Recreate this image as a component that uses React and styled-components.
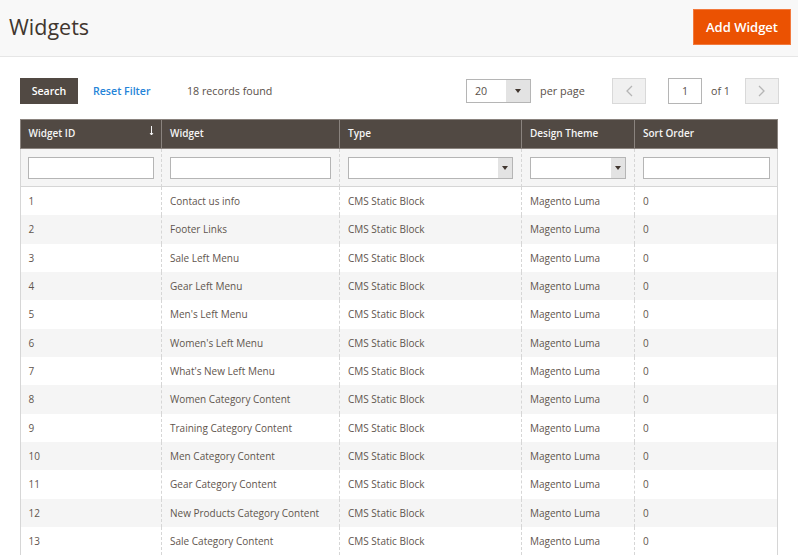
import React from 'react';
import styled, { createGlobalStyle } from 'styled-components';

const Global = createGlobalStyle`
  html, body { margin: 0; padding: 0; background: #fff; overflow: hidden; height: 556px; }
  body { font-family: "Open Sans", "Liberation Sans", sans-serif; color: #41362f; }
  * { box-sizing: border-box; }
`;

const Page = styled.div`width: 798px; height: 556px; overflow: hidden;`;
const Header = styled.header`
  height: 57px; background: #f8f8f8; border-bottom: 1px solid #e6e6e6;
  display: flex; align-items: flex-start; justify-content: space-between;
  padding: 9px 7px 0 9px;
`;
const Title = styled.h1`
  margin: 0; font-size: 21.5px; line-height: 35px; font-weight: 400; color: #41362f;
`;
const AddButton = styled.button`
  width: 98px; height: 36px; border: 1px solid #f2793d; background: #eb5202; color: #fff;
  font: 600 13px "Open Sans", sans-serif; padding: 0;
`;
const Content = styled.main`padding: 21px 20px 0;`;
const Toolbar = styled.div`display: flex; align-items: center; height: 26px; margin-bottom: 15px;`;
const SearchButton = styled.button`
  width: 58px; height: 26px; border: 0; background: #514943; color: #fff;
  font: 600 10.6px "Open Sans", sans-serif; padding: 0 0 1px; flex: none;
`;
const ResetLink = styled.a`
  margin-left: 15px; width: 94px; color: #2584d8; font-size: 10.6px; font-weight: 600; flex: none;
  line-height: 26px; align-self: flex-start;
`;
const Records = styled.span`
  font-size: 10.7px; color: #5a5049; flex: none; width: 279px; line-height: 26px; align-self: flex-start;
`;
const PerPage = styled.div`
  width: 65px; height: 24px; border: 1px solid #b5b5b5; display: flex; flex: none; background: #fff;
`;
const PerValue = styled.span`flex: 1; font-size: 10.7px; line-height: 22px; padding-left: 8px; color: #5a5049;`;
const SelectCap = styled.span`
  width: ${p => p.$w}px; align-self: stretch; background: #e3e3e3; display: flex;
  align-items: center; justify-content: center; flex: none;
`;
const Caret = styled.i`
  width: 0; height: 0; border-left: 3px solid transparent; border-right: 3px solid transparent;
  border-top: 4px solid #41362f;
`;
const PerLabel = styled.span`
  font-size: 10.9px; margin-left: 9px; flex: none; width: 72px; line-height: 26px; align-self: flex-start; color: #5a5049;
`;
const PageButton = styled.button`
  width: 34px; height: 26px; background: #f0f0f0; border: 1px solid #d9d9d9; padding: 0;
  display: flex; align-items: center; justify-content: center; flex: none;
`;
const PageInput = styled.div`
  width: 34px; height: 26px; margin-left: 22px; border: 1px solid #b5b5b5; background: #fff;
  font-size: 10.7px; line-height: 24px; text-align: center; flex: none; color: #5a5049;
`;
const OfLabel = styled.span`
  font-size: 10.7px; margin-left: 9px; width: 34px; flex: none; line-height: 26px; align-self: flex-start; color: #5a5049;
`;

const Table = styled.table`
  width: 758px; border-collapse: separate; border-spacing: 0; table-layout: fixed;
  font-size: 10px;
`;
const Th = styled.th`
  height: 30px; padding: 0 8px 2px; background: #514943; color: #f5f5f5; text-align: left;
  font-size: 10px; font-weight: 600; position: relative;
  border-left: 1px solid #8a837e; border-top: 1px solid #8a837e; border-bottom: 1px solid #8a837e;
  &:first-child { padding-left: 7.5px; }
  &:last-child { border-right: 1px solid #8a837e; }
`;
const SortArrow = styled.svg`position: absolute; right: 7px; top: 6px;`;
const FilterCell = styled.td`
  height: 38px; padding: 0 8px; background: #f5f5f5;
  border-left: 1px dashed #d6d6d6; border-bottom: 1px solid #d6d6d6;
  &:first-child { border-left: 1px solid #d6d6d6; padding-left: 7px; padding-right: 7px; }
  &:last-child { border-right: 1px solid #d6d6d6; padding-right: 7px; }
`;
const FilterInput = styled.div`
  height: 22px; border: 1px solid #b5b5b5; background: #fff; display: flex; justify-content: flex-end;
`;
const Td = styled.td`
  height: 28.33px; padding: 0 8px; color: #5f554e; background: ${p => (p.$odd ? '#f5f5f5' : '#fff')};
  border-left: 1px dashed #d6d6d6; white-space: nowrap; overflow: hidden;
  &:first-child { border-left: 1px solid #d6d6d6; padding-left: 7.5px; }
  &:last-child { border-right: 1px solid #d6d6d6; }
`;

const names = ['Contact us info','Footer Links','Sale Left Menu','Gear Left Menu',"Men's Left Menu","Women's Left Menu","What's New Left Menu",'Women Category Content','Training Category Content','Men Category Content','Gear Category Content','New Products Category Content','Sale Category Content'];
const Chevron = ({ left }) => (
  <svg width="8" height="12" viewBox="0 0 8 12" fill="none" stroke="#b5b5b5" strokeWidth="1.3">
    <path d={left ? 'M7 1 2 6l5 5' : 'M1 1l5 5-5 5'} />
  </svg>
);

export default function App() {
  return (
    <Page>
      <Global />
      <Header>
        <Title>Widgets</Title>
        <AddButton>Add Widget</AddButton>
      </Header>
      <Content>
        <Toolbar>
          <SearchButton>Search</SearchButton>
          <ResetLink>Reset Filter</ResetLink>
          <Records>18 records found</Records>
          <PerPage><PerValue>20</PerValue><SelectCap $w={24}><Caret /></SelectCap></PerPage>
          <PerLabel>per page</PerLabel>
          <PageButton><Chevron left /></PageButton>
          <PageInput>1</PageInput>
          <OfLabel>of 1</OfLabel>
          <PageButton><Chevron /></PageButton>
        </Toolbar>
        <Table>
          <colgroup>
            <col width="141" /><col width="178" /><col width="182" /><col width="113" /><col width="144" />
          </colgroup>
          <thead>
            <tr>
              <Th>Widget ID
                <SortArrow width="5" height="10" viewBox="0 0 5 10" fill="none" stroke="#f5f5f5"><path d="M2.5 0v9M1 7l1.5 2L4 7" /></SortArrow>
              </Th>
              <Th>Widget</Th><Th>Type</Th><Th>Design Theme</Th><Th>Sort Order</Th>
            </tr>
            <tr>
              <FilterCell><FilterInput /></FilterCell>
              <FilterCell><FilterInput /></FilterCell>
              <FilterCell><FilterInput><SelectCap $w={14}><Caret /></SelectCap></FilterInput></FilterCell>
              <FilterCell><FilterInput><SelectCap $w={14}><Caret /></SelectCap></FilterInput></FilterCell>
              <FilterCell><FilterInput /></FilterCell>
            </tr>
          </thead>
          <tbody>
            {names.map((n, i) => (
              <tr key={n}>
                <Td $odd={i % 2}>{i + 1}</Td>
                <Td $odd={i % 2}>{n}</Td>
                <Td $odd={i % 2}>CMS Static Block</Td>
                <Td $odd={i % 2}>Magento Luma</Td>
                <Td $odd={i % 2}>0</Td>
              </tr>
            ))}
          </tbody>
        </Table>
      </Content>
    </Page>
  );
}
